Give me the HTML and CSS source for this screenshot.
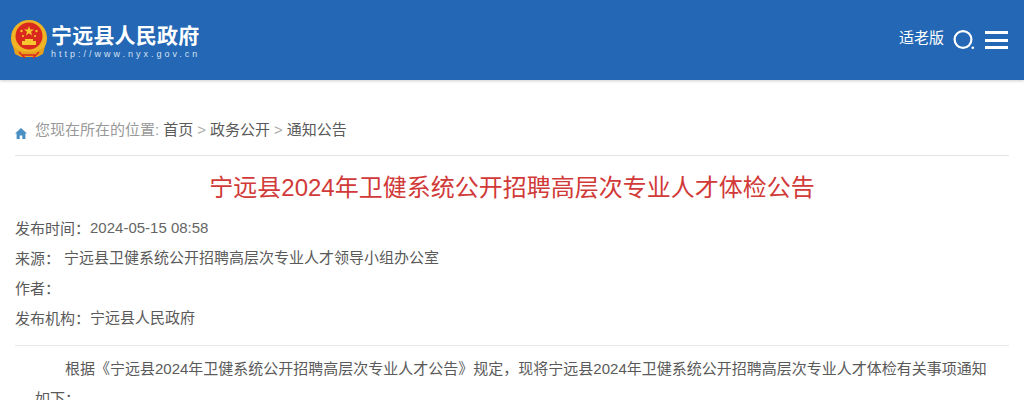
FILE: index.html
```html
<!DOCTYPE html>
<html lang="zh-CN">

<head>
    <meta charset="UTF-8">
    <title>宁远县2024年卫健系统公开招聘高层次专业人才体检公告</title>
    <link rel="stylesheet" href="styles.css">
</head>

<body>
    <header class="topbar">
        <div class="logo">
            <svg class="emblem" width="38" height="40" viewBox="0 0 38 40">
                <circle cx="19" cy="18" r="18" fill="#f0b323" />
                <circle cx="19" cy="16" r="13.5" fill="#d9281e" />
                <polygon points="19,6 20.2,9.6 24,9.6 21,11.8 22.1,15.4 19,13.2 15.9,15.4 17,11.8 14,9.6 17.8,9.6" fill="#f7c52d" />
                <circle cx="11.5" cy="11" r="1.2" fill="#f7c52d" />
                <circle cx="26.5" cy="11" r="1.2" fill="#f7c52d" />
                <circle cx="13" cy="16" r="1.1" fill="#f7c52d" />
                <circle cx="25" cy="16" r="1.1" fill="#f7c52d" />
                <rect x="12" y="21" width="14" height="4" fill="#f7c52d" />
                <rect x="15" y="19" width="8" height="2" fill="#f7c52d" />
                <path d="M3 26 C8 31 12 32 19 32 C26 32 30 31 35 26 L33 34 L27 37 L11 37 L5 34 Z" fill="#e8a11d" />
                <path d="M9 32 L15 38 M29 32 L23 38 M13 35 H25" stroke="#d9281e" stroke-width="1.6" fill="none" />
            </svg>
            <div class="logo-text">
                <div class="logo-name">宁远县人民政府</div>
                <div class="logo-url">http://www.nyx.gov.cn</div>
            </div>
        </div>
        <div class="tools">
            <a class="elder">适老版</a>
            <svg class="tool-icon" width="22" height="20" viewBox="0 0 22 20">
                <circle cx="10" cy="9.5" r="8.4" fill="none" stroke="#fff" stroke-width="2.2" />
                <circle cx="19.8" cy="17.8" r="1.3" fill="#fff" />
            </svg>
            <div class="menu-icon"><span></span><span></span><span></span></div>
        </div>
    </header>

    <main class="page">
        <div class="crumbs">
            <svg class="home" width="12" height="11" viewBox="0 0 12 11">
                <path d="M6 0 L12 5.6 L10.4 5.6 L10.4 11 L7.3 11 L7.3 7.4 L4.7 7.4 L4.7 11 L1.6 11 L1.6 5.6 L0 5.6 Z" fill="#4a8fc4" />
            </svg>
            <span class="crumb-label">您现在所在的位置:</span>
            <a>首页</a><span class="sep">&gt;</span><a>政务公开</a><span class="sep">&gt;</span><a>通知公告</a>
        </div>

        <h1 class="title">宁远县2024年卫健系统公开招聘高层次专业人才体检公告</h1>

        <div class="meta">
            <div class="meta-row"><span class="meta-key">发布时间<span class="colon">：</span></span><span class="meta-date">2024-05-15 08:58</span></div>
            <div class="meta-row"><span class="meta-key">来源<span class="colon">：</span></span><span class="meta-source">宁远县卫健系统公开招聘高层次专业人才领导小组办公室</span></div>
            <div class="meta-row"><span class="meta-key">作者<span class="colon">：</span></span></div>
            <div class="meta-row"><span class="meta-key">发布机构<span class="colon">：</span></span><span>宁远县人民政府</span></div>
        </div>

        <div class="article">
            <p>根据《宁远县2024年卫健系统公开招聘高层次专业人才公告》规定，现将宁远县2024年卫健系统公开招聘高层次专业人才体检有关事项通知如下：</p>
        </div>
    </main>
</body>

</html>
```

FILE: styles.css
```css
html,
body {
    margin: 0;
    height: 400px;
    overflow: hidden;
}

body {
    background-color: #fff;
    font-family: "Liberation Sans", "Noto Sans CJK SC", sans-serif;
    color: #5a5a5a;
}

.topbar {
    height: 80px;
    background-color: #2367b5;
    box-shadow: 0 1px 3px rgba(0, 0, 0, 0.2);
    display: flex;
    justify-content: space-between;
    align-items: center;
    padding: 0 16px 0 10px;
}

.logo {
    display: flex;
    align-items: center;
    gap: 3px;
}

.logo-name {
    color: #fff;
    font-size: 21px;
    font-weight: bold;
    letter-spacing: 0.2px;
    line-height: 24px;
    padding-top: 4px;
    white-space: nowrap;
}

.logo-url {
    color: #d5e2f2;
    font-size: 9px;
    letter-spacing: 3px;
    line-height: 12px;
    white-space: nowrap;
}

.tools {
    display: flex;
    align-items: center;
}

.elder {
    color: #fff;
    font-size: 15px;
    margin-right: 9px;
    margin-top: -8px;
}

.tool-icon {
    margin-right: 10px;
}

.menu-icon {
    width: 23px;
    display: flex;
    flex-direction: column;
    gap: 4.5px;
}

.menu-icon span {
    height: 3px;
    background-color: #fff;
}

.page {
    padding: 0 15px;
}

.crumbs {
    margin-top: 40px;
    height: 35px;
    border-bottom: 1px solid #e4e4e4;
    font-size: 15px;
    line-height: 20px;
    display: flex;
    align-items: flex-start;
}

.home {
    margin: 8px 8px 0 0;
}

.crumb-label {
    color: #999;
    margin-right: 4px;
}

.sep {
    color: #aaa;
    margin: 0 4px;
}

.title {
    margin: 0;
    padding-top: 16px;
    color: #d13a38;
    font-size: 24px;
    font-weight: normal;
    line-height: 32px;
    text-align: center;
}

.meta {
    margin-top: 9px;
    padding-bottom: 12px;
    border-bottom: 1px solid #e8e8e8;
    font-size: 15px;
}

.meta-row {
    height: 30px;
    line-height: 30px;
    display: flex;
}

/* the TC face centres the full-width colon in its box */
.colon {
    font-family: "Noto Sans CJK TC", sans-serif;
}

.meta-date {
    color: #666;
}

.meta-source {
    margin-left: 4px;
}

.article {
    margin-top: 8px;
    padding: 0 20px;
    font-size: 15px;
    line-height: 30px;
}

.article p {
    margin: 0;
    text-indent: 30px;
}
```
